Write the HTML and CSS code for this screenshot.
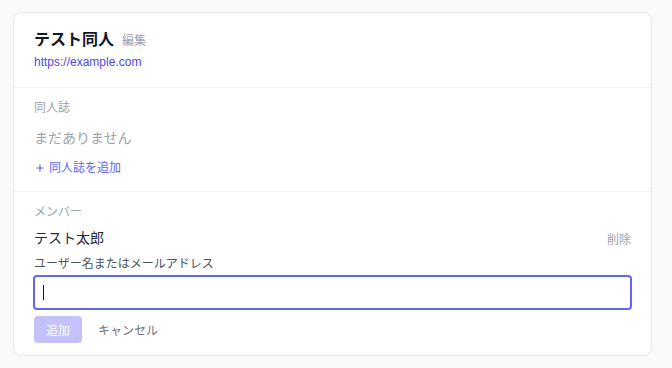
FILE: index.html
```html
<!DOCTYPE html>
<html lang="ja">
<head>
<meta charset="utf-8">
<link rel="stylesheet" href="styles.css">
</head>
<body>
<div class="card">
  <section class="sec head">
    <div class="title-row"><h1 class="title">テスト同人</h1><span class="edit">編集</span></div>
    <a class="link" href="#">https://example.com</a>
  </section>
  <section class="sec books">
    <div class="label">同人誌</div>
    <div class="empty">まだありません</div>
    <a class="add-link" href="#"><svg class="plus" width="12" height="12" viewBox="0 0 12 12"><path d="M6 2.5v7M2.5 6h7" stroke="currentColor" stroke-width="1.2" fill="none"/></svg>同人誌を追加</a>
  </section>
  <section class="sec members">
    <div class="label">メンバー</div>
    <div class="member"><span class="name">テスト太郎</span><span class="del">削除</span></div>
    <div class="field-label">ユーザー名またはメールアドレス</div>
    <div class="input"><span class="caret"></span></div>
    <div class="actions"><span class="btn-add">追加</span><span class="btn-cancel">キャンセル</span></div>
  </section>
</div>
</body>
</html>
```
FILE: styles.css
```css
* { box-sizing: border-box; }
html, body { margin: 0; background: #f9fafb; }
body {
  font-family: "Liberation Sans", "Noto Sans CJK JP", sans-serif;
  padding: 12px 0 0 13px;
  color: #111827;
}
.card {
  width: 639px;
  height: 344px;
  background: #fff;
  border: 1px solid #e5e7eb;
  border-radius: 8px;
}
.sec { padding: 0 20px; }
.head { padding-top: 15px; padding-bottom: 17px; border-bottom: 1px solid #f3f4f6; }
.title-row { display: flex; align-items: baseline; gap: 8px; }
.title { margin: 0; font-size: 16px; line-height: 24px; font-weight: 700; color: #111827; }
.edit { font-size: 12px; color: #9ca3af; }
.link { display: block; margin-top: 2px; font-size: 12px; line-height: 16px; color: #4f46e5; text-decoration: none; }
.books { padding-top: 12px; padding-bottom: 15px; border-bottom: 1px solid #f3f4f6; }
.label { font-size: 12px; line-height: 16px; color: #9ca3af; }
.empty { margin-top: 12px; font-size: 14px; line-height: 20px; color: #9ca3af; }
.add-link { display: flex; align-items: center; gap: 3px; margin-top: 12px; font-size: 12px; line-height: 16px; color: #6366f1; text-decoration: none; }
.plus { display: block; }
.members { padding-top: 12px; }
.member { margin-top: 8px; display: flex; justify-content: space-between; align-items: center; height: 20px; }
.name { font-size: 14px; line-height: 20px; color: #1f2937; }
.del { font-size: 12px; color: #9ca3af; }
.field-label { margin-top: 8px; font-size: 12px; line-height: 16px; color: #4b5563; }
.input {
  margin: 3px -1px 0;
  height: 35px;
  border: 2px solid #6366f1;
  border-radius: 4px;
  display: flex;
  align-items: center;
  padding-left: 8px;
}
.caret { width: 1px; height: 15px; background: #111827; }
.actions { margin-top: 6px; display: flex; align-items: center; gap: 16px; }
.btn-add {
  width: 48px; height: 27px;
  display: flex; align-items: center; justify-content: center;
  background: #c4c1fb; color: #fff; font-size: 12px; border-radius: 4px;
}
.btn-cancel { font-size: 12px; color: #6b7280; }
```
